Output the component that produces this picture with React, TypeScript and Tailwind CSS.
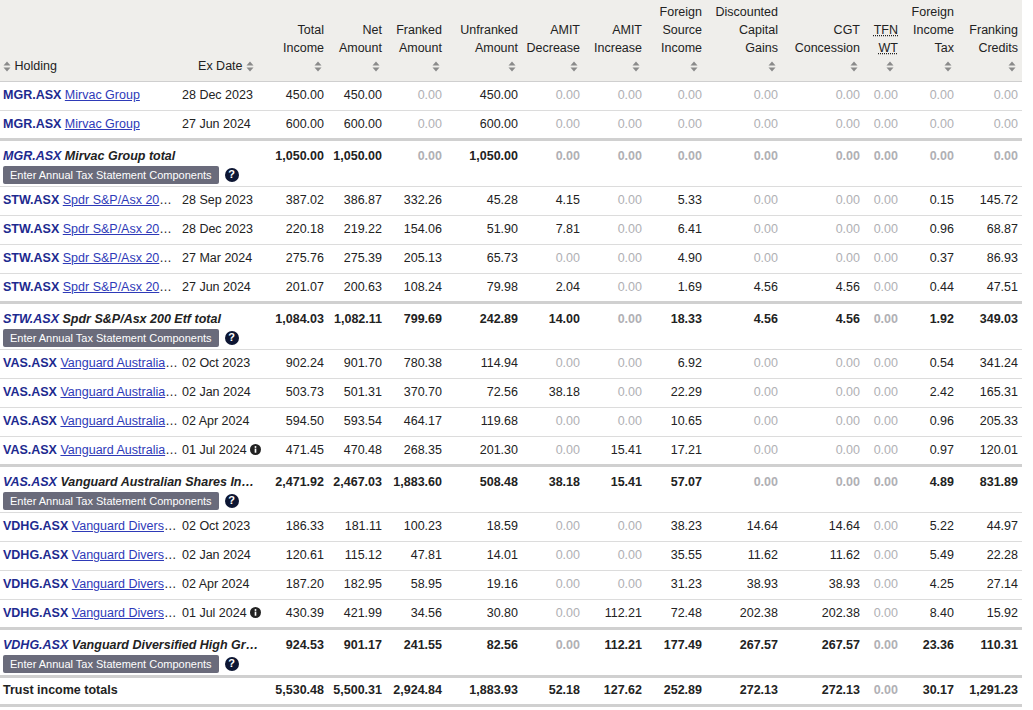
import React from "react";

type Row = { code: string; name: string; date: string; info?: boolean; v: string[] };
type Group = { code: string; name: string; rows: Row[]; total: string[] };

const Z = "0.00";
const groups: Group[] = [
  {
    code: "MGR.ASX", name: "Mirvac Group",
    rows: [
      { code: "MGR.ASX", name: "Mirvac Group", date: "28 Dec 2023", v: ["450.00","450.00",Z,"450.00",Z,Z,Z,Z,Z,Z,Z,Z] },
      { code: "MGR.ASX", name: "Mirvac Group", date: "27 Jun 2024", v: ["600.00","600.00",Z,"600.00",Z,Z,Z,Z,Z,Z,Z,Z] },
    ],
    total: ["1,050.00","1,050.00",Z,"1,050.00",Z,Z,Z,Z,Z,Z,Z,Z],
  },
  {
    code: "STW.ASX", name: "Spdr S&P/Asx 200 Etf",
    rows: [
      { code: "STW.ASX", name: "Spdr S&P/Asx 200 Etf", date: "28 Sep 2023", v: ["387.02","386.87","332.26","45.28","4.15",Z,"5.33",Z,Z,Z,"0.15","145.72"] },
      { code: "STW.ASX", name: "Spdr S&P/Asx 200 Etf", date: "28 Dec 2023", v: ["220.18","219.22","154.06","51.90","7.81",Z,"6.41",Z,Z,Z,"0.96","68.87"] },
      { code: "STW.ASX", name: "Spdr S&P/Asx 200 Etf", date: "27 Mar 2024", v: ["275.76","275.39","205.13","65.73",Z,Z,"4.90",Z,Z,Z,"0.37","86.93"] },
      { code: "STW.ASX", name: "Spdr S&P/Asx 200 Etf", date: "27 Jun 2024", v: ["201.07","200.63","108.24","79.98","2.04",Z,"1.69","4.56","4.56",Z,"0.44","47.51"] },
    ],
    total: ["1,084.03","1,082.11","799.69","242.89","14.00",Z,"18.33","4.56","4.56",Z,"1.92","349.03"],
  },
  {
    code: "VAS.ASX", name: "Vanguard Australian Shares Index Etf",
    rows: [
      { code: "VAS.ASX", name: "Vanguard Australian Shares", date: "02 Oct 2023", v: ["902.24","901.70","780.38","114.94",Z,Z,"6.92",Z,Z,Z,"0.54","341.24"] },
      { code: "VAS.ASX", name: "Vanguard Australian Shares", date: "02 Jan 2024", v: ["503.73","501.31","370.70","72.56","38.18",Z,"22.29",Z,Z,Z,"2.42","165.31"] },
      { code: "VAS.ASX", name: "Vanguard Australian Shares", date: "02 Apr 2024", v: ["594.50","593.54","464.17","119.68",Z,Z,"10.65",Z,Z,Z,"0.96","205.33"] },
      { code: "VAS.ASX", name: "Vanguard Australian Shares", date: "01 Jul 2024", info: true, v: ["471.45","470.48","268.35","201.30",Z,"15.41","17.21",Z,Z,Z,"0.97","120.01"] },
    ],
    total: ["2,471.92","2,467.03","1,883.60","508.48","38.18","15.41","57.07",Z,Z,Z,"4.89","831.89"],
  },
  {
    code: "VDHG.ASX", name: "Vanguard Diversified High Growth Index Etf",
    rows: [
      { code: "VDHG.ASX", name: "Vanguard Diversified High", date: "02 Oct 2023", v: ["186.33","181.11","100.23","18.59",Z,Z,"38.23","14.64","14.64",Z,"5.22","44.97"] },
      { code: "VDHG.ASX", name: "Vanguard Diversified High", date: "02 Jan 2024", v: ["120.61","115.12","47.81","14.01",Z,Z,"35.55","11.62","11.62",Z,"5.49","22.28"] },
      { code: "VDHG.ASX", name: "Vanguard Diversified High", date: "02 Apr 2024", v: ["187.20","182.95","58.95","19.16",Z,Z,"31.23","38.93","38.93",Z,"4.25","27.14"] },
      { code: "VDHG.ASX", name: "Vanguard Diversified High", date: "01 Jul 2024", info: true, v: ["430.39","421.99","34.56","30.80",Z,"112.21","72.48","202.38","202.38",Z,"8.40","15.92"] },
    ],
    total: ["924.53","901.17","241.55","82.56",Z,"112.21","177.49","267.57","267.57",Z,"23.36","110.31"],
  },
];
const grand = ["5,530.48","5,500.31","2,924.84","1,883.93","52.18","127.62","252.89","272.13","272.13",Z,"30.17","1,291.23"];

const widths = [178, 84, 66, 58, 60, 76, 62, 62, 60, 76, 82, 38, 56, 64];
const heads: string[][] = [
  ["Total", "Income"], ["Net", "Amount"], ["Franked", "Amount"], ["Unfranked", "Amount"],
  ["AMIT", "Decrease"], ["AMIT", "Increase"], ["Foreign", "Source", "Income"],
  ["Discounted", "Capital", "Gains"], ["CGT", "Concession"], ["TFN", "WT"],
  ["Foreign", "Income", "Tax"], ["Franking", "Credits"],
];

const Sort = () => (
  <svg width="8" height="11" viewBox="0 0 8 11" className="inline-block">
    <path d="M4 0.5 L7.5 4.5 H0.5 Z" fill="#8a8a8a" />
    <path d="M4 10.5 L7.5 6.5 H0.5 Z" fill="#8a8a8a" />
  </svg>
);

const Info = () => (
  <svg width="11" height="11" viewBox="0 0 12 12" className="inline-block ml-[3px] -mt-[2px]">
    <circle cx="6" cy="6" r="6" fill="#222" />
    <rect x="5.1" y="5" width="1.8" height="4.5" fill="#fff" />
    <circle cx="6" cy="3.2" r="1.05" fill="#fff" />
  </svg>
);

const Help = () => (
  <span className="inline-flex items-center justify-center w-[14px] h-[14px] rounded-full bg-[#0d1633] text-white text-[11px] font-bold leading-none ml-[6px]">?</span>
);

const Num = ({ v, bold }: { v: string; bold?: boolean }) => (
  <td className={`text-right pr-[4px] whitespace-nowrap ${v === Z ? "text-[#b0b0b4]" : "text-[#222]"} ${bold ? "font-bold" : ""}`}>{v}</td>
);

export default function App() {
  return (
    <div className="w-[1033px] h-[710px] bg-white overflow-hidden" style={{ fontFamily: '"Liberation Sans", Arial, sans-serif' }}>
      <table className="table-fixed border-collapse text-[12.5px] text-[#222]" style={{ width: 1022 }}>
        <colgroup>
          {widths.map((w, i) => <col key={i} style={{ width: w }} />)}
        </colgroup>
        <thead>
          <tr className="bg-[#efeeeb] h-[81px] border-b border-[#cfcfcf] leading-[18px] font-normal">
            <th className="text-left align-bottom font-normal pl-[3px] pb-[6px] whitespace-nowrap"><Sort /> Holding</th>
            <th className="text-right align-bottom font-normal pr-[8px] pb-[6px] whitespace-nowrap">Ex Date <Sort /></th>
            {heads.map((h, i) => (
              <th key={i} className="text-right align-bottom font-normal pr-[4px] pb-[6px] whitespace-nowrap">
                {h.map((l, j) => (
                  <div key={j} className={i === 9 ? "underline decoration-dotted" : ""}>{l}</div>
                ))}
                <div className={i === 9 || i === 6 ? "text-right pr-[4px]" : "text-right pr-[2px]"}><Sort /></div>
              </th>
            ))}
          </tr>
        </thead>
        <tbody>
          {groups.map((g, gi) => (
            <React.Fragment key={gi}>
              {g.rows.map((r, ri) => (
                <tr key={ri} className="h-[29px] border-b border-[#dcdcdc]">
                  <td className="pl-[3px] whitespace-nowrap overflow-hidden text-ellipsis">
                    <span className="font-bold text-[#1d2a8f]">{r.code}</span>{" "}
                    <span className="text-[#2e3ab8] underline">{r.name}</span>
                  </td>
                  <td className="pl-[4px] whitespace-nowrap">{r.date}{r.info && <Info />}</td>
                  {r.v.map((v, vi) => <Num key={vi} v={v} />)}
                </tr>
              ))}
              <tr className="border-t-[3px] border-[#d0d0d0] border-b border-b-[#dcdcdc]">
                <td colSpan={2} className="pl-[3px] pt-[7px] pb-[2px] align-top">
                  <div className="whitespace-nowrap overflow-hidden text-ellipsis font-bold italic w-[256px] leading-[16px]">
                    <span className="text-[#1d2a8f]">{g.code}</span> {g.name} total
                  </div>
                  <div className="flex items-center mt-[2px]">
                    <span className="bg-[#6a6b7b] text-white text-[11px] rounded-[2px] px-[7px] h-[18px] leading-[18px]">Enter Annual Tax Statement Components</span>
                    <Help />
                  </div>
                </td>
                {g.total.map((v, vi) => (
                  <td key={vi} className={`text-right pr-[4px] align-top pt-[7px] font-bold leading-[16px] ${v === Z ? "text-[#b0b0b4]" : ""}`}>{v}</td>
                ))}
              </tr>
            </React.Fragment>
          ))}
          <tr className="h-[29px] border-t-[3px] border-[#d0d0d0] border-b-[3px] border-b-[#d0d0d0]">
            <td colSpan={2} className="pl-[3px] font-bold">Trust income totals</td>
            {grand.map((v, vi) => <Num key={vi} v={v} bold />)}
          </tr>
        </tbody>
      </table>
    </div>
  );
}
